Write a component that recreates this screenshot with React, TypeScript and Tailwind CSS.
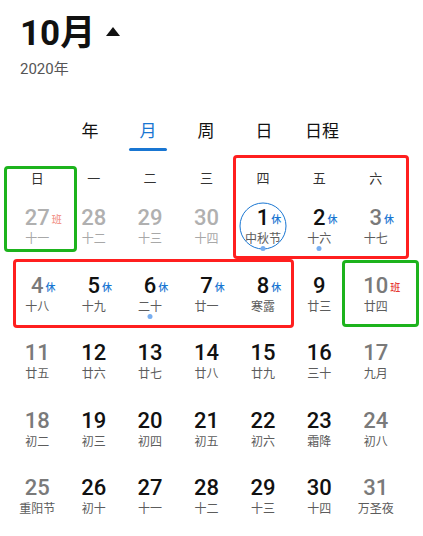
import React from "react";

type Day = {
  n: number;
  lunar: string;
  tone: "prev" | "weekday" | "weekend";
  tag?: "休" | "班";
  dot?: boolean;
  today?: boolean;
};

const weekdays = ["日", "一", "二", "三", "四", "五", "六"];

const rows: Day[][] = [
  [
    { n: 27, lunar: "十一", tone: "prev", tag: "班" },
    { n: 28, lunar: "十二", tone: "prev" },
    { n: 29, lunar: "十三", tone: "prev" },
    { n: 30, lunar: "十四", tone: "prev" },
    { n: 1, lunar: "中秋节", tone: "weekday", tag: "休", dot: true, today: true },
    { n: 2, lunar: "十六", tone: "weekday", tag: "休", dot: true },
    { n: 3, lunar: "十七", tone: "weekend", tag: "休" },
  ],
  [
    { n: 4, lunar: "十八", tone: "weekend", tag: "休" },
    { n: 5, lunar: "十九", tone: "weekday", tag: "休" },
    { n: 6, lunar: "二十", tone: "weekday", tag: "休", dot: true },
    { n: 7, lunar: "廿一", tone: "weekday", tag: "休" },
    { n: 8, lunar: "寒露", tone: "weekday", tag: "休" },
    { n: 9, lunar: "廿三", tone: "weekday" },
    { n: 10, lunar: "廿四", tone: "weekend", tag: "班" },
  ],
  [
    { n: 11, lunar: "廿五", tone: "weekend" },
    { n: 12, lunar: "廿六", tone: "weekday" },
    { n: 13, lunar: "廿七", tone: "weekday" },
    { n: 14, lunar: "廿八", tone: "weekday" },
    { n: 15, lunar: "廿九", tone: "weekday" },
    { n: 16, lunar: "三十", tone: "weekday" },
    { n: 17, lunar: "九月", tone: "weekend" },
  ],
  [
    { n: 18, lunar: "初二", tone: "weekend" },
    { n: 19, lunar: "初三", tone: "weekday" },
    { n: 20, lunar: "初四", tone: "weekday" },
    { n: 21, lunar: "初五", tone: "weekday" },
    { n: 22, lunar: "初六", tone: "weekday" },
    { n: 23, lunar: "霜降", tone: "weekday" },
    { n: 24, lunar: "初八", tone: "weekend" },
  ],
  [
    { n: 25, lunar: "重阳节", tone: "weekend" },
    { n: 26, lunar: "初十", tone: "weekday" },
    { n: 27, lunar: "十一", tone: "weekday" },
    { n: 28, lunar: "十二", tone: "weekday" },
    { n: 29, lunar: "十三", tone: "weekday" },
    { n: 30, lunar: "十四", tone: "weekday" },
    { n: 31, lunar: "万圣夜", tone: "weekend" },
  ],
];

function DayCell({ d }: { d: Day }) {
  const numColor =
    d.tone === "prev" ? "text-[#b0b0b0]" : d.tone === "weekend" ? "text-[#7a7a7a]" : "text-[#111111]";
  const lunarColor = d.tone === "prev" ? "text-[#a8a8a8]" : "text-[#5c5c5c]";
  const tagColor =
    d.tag === "休" ? "text-[#1976d2]" : d.tone === "prev" ? "text-[#f2998f]" : "text-[#e53935]";

  return (
    <div className="relative flex h-[67.5px] flex-col items-center justify-center">
      {d.today && (
        <div className="absolute left-1/2 top-1/2 h-[47px] w-[47px] -translate-x-1/2 -translate-y-1/2 rounded-full border-[1.5px] border-[#1976d2]" />
      )}
      <div className={`relative text-[22px] font-medium leading-[26px] ${numColor}`}>
        {d.n}
        {d.tag && (
          <span className={`absolute left-full top-[10px] ml-[2px] text-[10px] leading-none ${tagColor}`}>
            {d.tag}
          </span>
        )}
      </div>
      <div className={`relative text-[12px] leading-[16px] ${lunarColor}`}>
        {d.lunar}
        {d.dot && (
          <span className="absolute left-1/2 top-[15px] h-[5px] w-[5px] -translate-x-1/2 rounded-full bg-[#78aef0]" />
        )}
      </div>
    </div>
  );
}

export default function App() {
  return (
    <div
      className="relative h-[536px] w-[423px] overflow-hidden bg-white"
      style={{ fontFamily: 'Roboto, "Noto Sans CJK SC", sans-serif' }}
    >
      <header className="px-[20px] pt-[12px]">
        <div className="flex items-center">
          <h1 className="text-[35px] font-bold leading-[44px] text-[#111111]">10月</h1>
          <svg className="ml-[11px] mt-[-6px]" width="14" height="9" viewBox="0 0 14 9">
            <polygon points="7,0 14,9 0,9" fill="#111111" />
          </svg>
        </div>
        <p className="mt-[3px] text-[15px] leading-[20px] text-[#555555]">2020年</p>
      </header>

      <nav className="ml-[61px] mt-[40px] flex">
        {["年", "月", "周", "日", "日程"].map((t) => (
          <div key={t} className="flex w-[58px] flex-col items-center">
            <span
              className={`text-[17px] leading-[24px] ${t === "月" ? "text-[#1976d2]" : "text-[#111111]"}`}
            >
              {t}
            </span>
            <span
              className={`mt-[5px] h-[2.5px] w-[38px] rounded-full ${t === "月" ? "bg-[#1976d2]" : "bg-transparent"}`}
            />
          </div>
        ))}
      </nav>

      <div className="ml-[9px] mt-[15px] w-[395px]">
        <div className="grid h-[27px] grid-cols-7 items-center">
          {weekdays.map((w) => (
            <div key={w} className="text-center text-[13px] text-[#333333]">
              {w}
            </div>
          ))}
        </div>
        {rows.map((r, i) => (
          <div key={i} className="grid grid-cols-7">
            {r.map((d, j) => (
              <DayCell key={j} d={d} />
            ))}
          </div>
        ))}
      </div>

      {/* annotation frames over the grid */}
      <div className="pointer-events-none absolute left-[233px] top-[155px] h-[104px] w-[176px] rounded-[4px] border-[3px] border-[#ff1f1f]" />
      <div className="pointer-events-none absolute left-[13px] top-[259px] h-[69px] w-[281px] rounded-[4px] border-[3px] border-[#ff1f1f]" />
      <div className="pointer-events-none absolute left-[4px] top-[166px] h-[86px] w-[73px] rounded-[4px] border-[3px] border-[#1db31d]" />
      <div className="pointer-events-none absolute left-[342px] top-[260px] h-[67px] w-[77px] rounded-[4px] border-[3px] border-[#1db31d]" />
    </div>
  );
}
